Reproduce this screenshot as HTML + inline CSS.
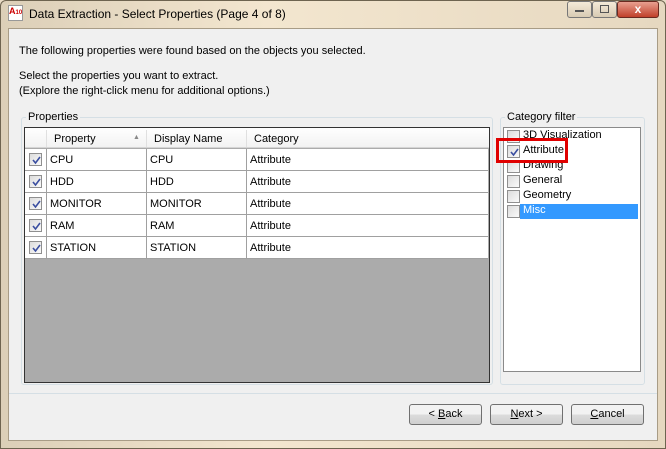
<!DOCTYPE html>
<html><head><style>
*{margin:0;padding:0;box-sizing:border-box}
body{width:666px;height:449px;overflow:hidden;font-family:"Liberation Sans",sans-serif;font-size:11px;color:#000;background:#e9dcc6;position:relative}
.abs{position:absolute}
.frame{left:0;top:0;width:666px;height:449px;background:linear-gradient(90deg,#dccfb8,#f3e6cf 40%,#e6d8c0);border:1px solid #6e6450;border-radius:6px 6px 0 0}
.client{left:8px;top:28px;width:650px;height:413px;background:#f0f0f0;border:1px solid #a89c86}
.t{position:absolute;white-space:nowrap}
.grp{position:absolute;border:1px solid #d5dfe5;border-radius:3px}
.cb{position:absolute;width:13px;height:13px;border:1px solid #8f8f8f;background:linear-gradient(135deg,#dcdcdc,#fafafa)}
.cb svg{position:absolute;left:1px;top:1px}
.btn{position:absolute;width:73px;height:21px;border:1px solid #707070;border-radius:3px;background:linear-gradient(#f2f2f2 50%,#dcdcdc 50%,#cfcfcf);text-align:center;line-height:19px;font-size:11px}
.row{position:absolute;left:0;width:463px;height:22px;border-bottom:1px solid #a0a0a0;background:#fff}
.row span{position:absolute;top:5px}
.vl{position:absolute;top:0;width:1px;height:22px;background:#a0a0a0}
</style></head><body>
<div class="abs frame"></div>
<div class="t" style="left:8px;top:5px;width:15px;height:16px;background:#fff;border:1px solid #999;font-size:9px;color:#c00;font-weight:bold;line-height:10px">A<span style="font-size:6px">10</span></div>
<div class="t" style="left:29px;top:7px;font-size:12px">Data Extraction - Select Properties (Page 4 of 8)</div>
<div class="abs" style="left:567px;top:1px;width:25px;height:17px;border:1px solid #777;border-radius:3px;background:linear-gradient(#f4ead8,#d8cbb3)"></div>
<div class="abs" style="left:592px;top:1px;width:25px;height:17px;border:1px solid #777;border-radius:3px;background:linear-gradient(#f4ead8,#d8cbb3)"></div>
<div class="abs" style="left:617px;top:1px;width:42px;height:17px;border:1px solid #6a2a20;border-radius:3px;background:linear-gradient(#e8a090,#c0402a);color:#fff;font-weight:bold;text-align:center;line-height:15px;font-size:12px">x</div>
<div class="abs" style="left:575px;top:10px;width:9px;height:2px;background:#555"></div>
<div class="abs" style="left:600px;top:5px;width:9px;height:8px;border:1px solid #555"></div>
<div class="abs client"></div>
<div class="t" style="left:19px;top:45px">The following properties were found based on the objects you selected.</div>
<div class="t" style="left:19px;top:70px">Select the properties you want to extract.</div>
<div class="t" style="left:19px;top:85px">(Explore the right-click menu for additional options.)</div>

<div class="grp" style="left:21px;top:117px;width:472px;height:268px"></div>
<div class="t" style="left:26px;top:111px;background:#f0f0f0;padding:0 2px">Properties</div>
<div class="abs" style="left:24px;top:127px;width:466px;height:256px;border:1px solid #333;background:#ababab;overflow:hidden">
 <div class="abs" style="left:0;top:0;width:464px;height:20px;background:linear-gradient(#fff,#f2f2f2);border-bottom:1px solid #d5d5d5"></div>
 <div class="abs" style="left:21px;top:2px;width:1px;height:17px;background:#e0e0e0"></div>
 <div class="abs" style="left:121px;top:2px;width:1px;height:17px;background:#e0e0e0"></div>
 <div class="abs" style="left:221px;top:2px;width:1px;height:17px;background:#e0e0e0"></div>
 <div class="t" style="left:29px;top:5px">Property</div>
 <div class="t" style="left:108px;top:6px;font-size:7px;color:#888">▲</div>
 <div class="t" style="left:129px;top:5px">Display Name</div>
 <div class="t" style="left:229px;top:5px">Category</div>
 <div class="row" style="top:21px"><div class="cb" style="left:4px;top:4px"><svg width="11" height="11"><path d="M2 5 L4.5 8 L9 2" stroke="#3a4ea0" stroke-width="1.6" fill="none"/></svg></div><div class="vl" style="left:21px"></div><span style="left:25px">CPU</span><div class="vl" style="left:121px"></div><span style="left:125px">CPU</span><div class="vl" style="left:221px"></div><span style="left:225px">Attribute</span></div>
 <div class="row" style="top:43px"><div class="cb" style="left:4px;top:4px"><svg width="11" height="11"><path d="M2 5 L4.5 8 L9 2" stroke="#3a4ea0" stroke-width="1.6" fill="none"/></svg></div><div class="vl" style="left:21px"></div><span style="left:25px">HDD</span><div class="vl" style="left:121px"></div><span style="left:125px">HDD</span><div class="vl" style="left:221px"></div><span style="left:225px">Attribute</span></div>
 <div class="row" style="top:65px"><div class="cb" style="left:4px;top:4px"><svg width="11" height="11"><path d="M2 5 L4.5 8 L9 2" stroke="#3a4ea0" stroke-width="1.6" fill="none"/></svg></div><div class="vl" style="left:21px"></div><span style="left:25px">MONITOR</span><div class="vl" style="left:121px"></div><span style="left:125px">MONITOR</span><div class="vl" style="left:221px"></div><span style="left:225px">Attribute</span></div>
 <div class="row" style="top:87px"><div class="cb" style="left:4px;top:4px"><svg width="11" height="11"><path d="M2 5 L4.5 8 L9 2" stroke="#3a4ea0" stroke-width="1.6" fill="none"/></svg></div><div class="vl" style="left:21px"></div><span style="left:25px">RAM</span><div class="vl" style="left:121px"></div><span style="left:125px">RAM</span><div class="vl" style="left:221px"></div><span style="left:225px">Attribute</span></div>
 <div class="row" style="top:109px"><div class="cb" style="left:4px;top:4px"><svg width="11" height="11"><path d="M2 5 L4.5 8 L9 2" stroke="#3a4ea0" stroke-width="1.6" fill="none"/></svg></div><div class="vl" style="left:21px"></div><span style="left:25px">STATION</span><div class="vl" style="left:121px"></div><span style="left:125px">STATION</span><div class="vl" style="left:221px"></div><span style="left:225px">Attribute</span></div>
</div>

<div class="grp" style="left:500px;top:117px;width:145px;height:268px"></div>
<div class="t" style="left:505px;top:111px;background:#f0f0f0;padding:0 2px">Category filter</div>
<div class="abs" style="left:503px;top:127px;width:138px;height:245px;border:1px solid #8a8a8a;background:#fff"></div>
<div class="abs" style="left:520px;top:204px;width:118px;height:15px;background:#3399ff"></div>
<div class="cb" style="left:507px;top:130px"></div><div class="t" style="left:523px;top:129px">3D Visualization</div>
<div class="cb" style="left:507px;top:145px"><svg width="11" height="11"><path d="M2 5 L4.5 8 L9 2" stroke="#3a4ea0" stroke-width="1.6" fill="none"/></svg></div><div class="t" style="left:523px;top:144px">Attribute</div>
<div class="cb" style="left:507px;top:160px"></div><div class="t" style="left:523px;top:159px">Drawing</div>
<div class="cb" style="left:507px;top:175px"></div><div class="t" style="left:523px;top:174px">General</div>
<div class="cb" style="left:507px;top:190px"></div><div class="t" style="left:523px;top:189px">Geometry</div>
<div class="cb" style="left:507px;top:205px"></div><div class="t" style="left:523px;top:204px;color:#fff">Misc</div>
<div class="abs" style="left:496px;top:138px;width:72px;height:25px;border:3px solid #e00000"></div>

<div class="abs" style="left:9px;top:393px;width:648px;height:1px;background:#d5dfe5"></div>
<div class="btn" style="left:409px;top:404px">&lt; <u>B</u>ack</div>
<div class="btn" style="left:490px;top:404px"><u>N</u>ext &gt;</div>
<div class="btn" style="left:571px;top:404px"><u>C</u>ancel</div>
</body></html>
